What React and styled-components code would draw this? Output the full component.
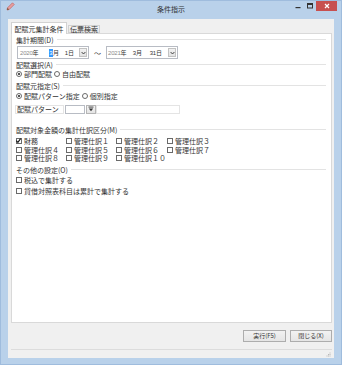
import React from 'react';
import styled, { createGlobalStyle } from 'styled-components';

const FONT = `"Noto Sans CJK JP", "Noto Sans", sans-serif`;

const Global = createGlobalStyle`
  html, body { margin: 0; padding: 0; background: #ffffff; }
  body { font-family: ${FONT}; }
  * { box-sizing: border-box; }
`;

const Window = styled.div`
  width: 342px;
  height: 365px;
  border: 1px solid #9fbcdd;
  background: #b9d1ea;
  display: flex;
  flex-direction: column;
  font-family: ${FONT};
  font-size: 7px;
  line-height: 8px;
  color: #333;
`;

const TitleBar = styled.div`
  height: 18px;
  display: grid;
  grid-template-columns: 1fr auto 1fr;
  align-items: start;
`;

const AppIcon = styled.svg`
  margin: 1px 0 0 5px;
  width: 9px;
  height: 9px;
`;

const Title = styled.div`
  padding-top: 4px;
  font-size: 7px;
  line-height: 8px;
  color: #333;
`;

const Controls = styled.div`
  display: flex;
  justify-content: flex-end;
  align-items: flex-start;
  padding-right: 4px;
`;

const CtrlBtn = styled.div`
  width: ${p => p.$w}px;
  height: 10px;
  display: flex;
  align-items: center;
  justify-content: center;
  background: ${p => (p.$close ? '#c75050' : 'transparent')};
`;

const Client = styled.div`
  flex: 1;
  margin: 0 7px 6px 7px;
  background: #f0f0f0;
  display: flex;
  flex-direction: column;
  padding: 3px 2px 0 3px;
`;

const TabStrip = styled.div`
  height: 11px;
  display: flex;
  align-items: flex-end;
`;

const Tab = styled.div`
  position: relative;
  z-index: ${p => (p.$active ? 1 : 0)};
  width: ${p => p.$w}px;
  height: ${p => (p.$active ? 12 : 8)}px;
  margin-bottom: ${p => (p.$active ? -1 : 0)}px;
  margin-left: ${p => (p.$active ? 0 : 1)}px;
  background: ${p => (p.$active ? '#ffffff' : 'linear-gradient(#f3f3f3, #e8e8e8)')};
  border: 1px solid #d2d2d2;
  border-bottom: ${p => (p.$active ? 'none' : '1px solid #d2d2d2')};
  display: flex;
  align-items: center;
  justify-content: center;
  padding-top: ${p => (p.$active ? 1 : 0)}px;
  white-space: nowrap;
`;

const Panel = styled.div`
  height: 290px;
  background: #ffffff;
  border: 1px solid #d9d9d9;
  padding: 2px 5px 0 4px;
  display: flex;
  flex-direction: column;
`;

const GroupHeader = styled.div`
  display: flex;
  align-items: center;
  gap: 3px;
  height: 8px;
  margin-top: ${p => p.$mt || 0}px;
  white-space: nowrap;
  &::after {
    content: '';
    flex: 1;
    border-top: 1px solid #e3e3e3;
    border-bottom: 1px solid #ffffff;
  }
`;

const DateRow = styled.div`
  display: flex;
  align-items: center;
  height: 13px;
  margin-top: 2px;
  padding-left: 1px;
`;

const DateBox = styled.div`
  width: ${p => p.$w}px;
  height: 13px;
  border: 1px solid #b8bcc4;
  background: #fff;
  display: flex;
  align-items: center;
  padding-left: ${p => p.$pl}px;
  padding-right: 1px;
`;

const Seg = styled.div`
  width: ${p => p.$w}px;
  display: flex;
  justify-content: ${p => (p.$right ? 'flex-end' : 'flex-start')};
  align-items: center;
  white-space: nowrap;
  font-size: 6px;
  line-height: 8px;
`;

const Digits = styled.span`
  font-family: "Liberation Sans", sans-serif;
  font-size: 6px;
  color: ${p => (p.$sel ? '#fff' : p.$muted ? '#8a8a8a' : '#333')};
  background: ${p => (p.$sel ? '#3399ff' : 'transparent')};
  padding: ${p => (p.$sel ? '0 0.5px' : '0')};
  letter-spacing: -0.2px;
`;

const DropBtn = styled.div`
  margin-left: auto;
  width: 8px;
  height: 9px;
  border: 1px solid #c2c2c2;
  background: linear-gradient(#f2f2f2, #e2e2e2);
  display: flex;
  align-items: center;
  justify-content: center;
`;

const Tilde = styled.div`
  width: 17px;
  text-align: center;
`;

const OptRow = styled.div`
  display: flex;
  align-items: center;
  height: 8px;
  margin-top: ${p => p.$mt || 0}px;
  gap: 2px;
`;

const RadioItem = styled.label`
  display: flex;
  align-items: center;
  gap: 2px;
  white-space: nowrap;
`;

const RadioCircle = styled.span`
  width: 6px;
  height: 6px;
  border-radius: 50%;
  border: 1px solid #6a6a6a;
  background: #fff;
  display: flex;
  align-items: center;
  justify-content: center;
  &::after {
    content: '';
    width: 2.5px;
    height: 2.5px;
    border-radius: 50%;
    background: ${p => (p.$on ? '#1a1a1a' : 'transparent')};
  }
`;

const PatternRow = styled.div`
  display: flex;
  align-items: center;
  height: 12px;
  margin-top: 3px;
`;

const PatternLabel = styled.div`
  width: 49px;
  height: 9px;
  margin-left: -1px;
  border: 1px solid #e4e4e4;
  display: flex;
  align-items: center;
  padding-left: 1px;
  white-space: nowrap;
`;

const Field = styled.div`
  width: ${p => p.$w}px;
  height: 9px;
  margin-left: ${p => p.$ml || 0}px;
  border: 1px solid ${p => p.$border || '#b8bcc4'};
  background: #fff;
`;

const SmallBtn = styled.div`
  width: 10px;
  height: 9px;
  margin-left: 1px;
  border: 1px solid #b5b5b5;
  background: linear-gradient(#f4f4f4, #e4e4e4);
  display: flex;
  align-items: center;
  justify-content: center;
`;

const CheckGrid = styled.div`
  display: grid;
  grid-template-columns: 50px 50px 51px auto;
  grid-auto-rows: 8.5px;
  margin-top: 3px;
`;

const CheckItem = styled.label`
  display: flex;
  align-items: center;
  gap: 2px;
  white-space: nowrap;
`;

const Box = styled.span`
  width: 6px;
  height: 6px;
  border: 1px solid #6a6a6a;
  background: #fff;
  display: flex;
  align-items: center;
  justify-content: center;
  flex: none;
`;

const ButtonRow = styled.div`
  display: flex;
  justify-content: flex-end;
  gap: 4px;
  padding-top: 7px;
  height: 26px;
`;

const Button = styled.div`
  width: ${p => p.$w}px;
  height: 12px;
  border: 1px solid #adadad;
  background: linear-gradient(#f2f2f2, #e5e5e5);
  display: flex;
  align-items: center;
  justify-content: center;
  white-space: nowrap;
  font-size: 6px;
`;

const StatusBar = styled.div`
  flex: 1;
  border-top: 1px solid #dcdcdc;
  display: flex;
  justify-content: flex-end;
  align-items: flex-end;
  padding: 0 1px 1px 0;
`;

const Check = () => (
  <svg width="6" height="6" viewBox="0 0 6 6" style={{ overflow: 'visible' }}>
    <path d="M0.3 2.6 L1.9 4.3 L4.6 0.6" fill="none" stroke="#111" strokeWidth="1.1" />
  </svg>
);

const CheckBox = ({ on, children }) => (
  <CheckItem>
    <Box>{on && <Check />}</Box>
    {children}
  </CheckItem>
);

const Radio = ({ on, children }) => (
  <RadioItem>
    <RadioCircle $on={on} />
    {children}
  </RadioItem>
);

const Chevron = () => (
  <svg width="5" height="4" viewBox="0 0 5 4">
    <path d="M0.6 1 L2.5 3 L4.4 1" fill="none" stroke="#333" strokeWidth="0.9" />
  </svg>
);

const DateField = ({ w, pl, year, month, day, sel, widths }) => (
  <DateBox $w={w} $pl={pl}>
    <Seg $w={widths[0]}>
      <Digits $muted>{year}</Digits>年
    </Seg>
    <Seg $w={widths[1]} $right>
      <Digits $sel={sel}>{month}</Digits>月
    </Seg>
    <Seg $w={widths[2]} $right>
      <Digits>{day}</Digits>日
    </Seg>
    <DropBtn>
      <Chevron />
    </DropBtn>
  </DateBox>
);

export default function App() {
  return (
    <>
      <Global />
      <Window>
        <TitleBar>
          <AppIcon viewBox="0 0 9 9">
            <path d="M6.5 0.8 L8.2 2.5 L3.2 7.5 L1 8 L1.5 5.8 Z" fill="#e8a0a0" stroke="#c05050" strokeWidth="0.6" />
            <path d="M1 8 L1.5 5.8 L3.2 7.5 Z" fill="#7a5a3a" />
          </AppIcon>
          <Title>条件指示</Title>
          <Controls>
            <CtrlBtn $w={12}>
              <svg width="6" height="6" viewBox="0 0 6 6">
                <rect x="0.5" y="4" width="5" height="1.2" fill="#333" />
              </svg>
            </CtrlBtn>
            <CtrlBtn $w={12}>
              <svg width="6" height="6" viewBox="0 0 6 6">
                <rect x="0.5" y="0.5" width="5" height="4.5" fill="none" stroke="#333" strokeWidth="1" />
                <rect x="0.5" y="0.5" width="5" height="1.5" fill="#333" />
              </svg>
            </CtrlBtn>
            <CtrlBtn $w={21} $close>
              <svg width="6" height="6" viewBox="0 0 6 6">
                <path d="M1 1 L5 5 M5 1 L1 5" stroke="#fff" strokeWidth="1.2" />
              </svg>
            </CtrlBtn>
          </Controls>
        </TitleBar>
        <Client>
          <TabStrip>
            <Tab $active $w={56}>配賦元集計条件</Tab>
            <Tab $w={32}>伝票検索</Tab>
          </TabStrip>
          <Panel>
            <GroupHeader>集計期間(D)</GroupHeader>
            <DateRow>
              <DateField w={72} pl={2} year="2020" month="3" day="1" sel widths={[17, 22, 15]} />
              <Tilde>～</Tilde>
              <DateField w={72} pl={1} year="2021" month="3" day="31" widths={[17, 17, 20]} />
            </DateRow>
            <GroupHeader $mt={2}>配賦選択(A)</GroupHeader>
            <OptRow $mt={1}>
              <Radio on>部門配賦</Radio>
              <Radio>自由配賦</Radio>
            </OptRow>
            <GroupHeader $mt={4}>配賦元指定(S)</GroupHeader>
            <OptRow $mt={2}>
              <Radio on>配賦パターン指定</Radio>
              <Radio>個別指定</Radio>
            </OptRow>
            <PatternRow>
              <PatternLabel>配賦パターン</PatternLabel>
              <Field $w={20} $ml={1} />
              <SmallBtn>
                <svg width="6" height="6" viewBox="0 0 6 6">
                  <rect x="0.5" y="0.6" width="5" height="0.9" fill="#333" />
                  <path d="M0.8 2.5 L5.2 2.5 L3 5.2 Z" fill="#333" />
                </svg>
              </SmallBtn>
              <Field $w={84} $border="#e4e4e4" />
            </PatternRow>
            <GroupHeader $mt={11}>配賦対象金額の集計仕訳区分(M)</GroupHeader>
            <CheckGrid>
              <CheckBox on>財務</CheckBox>
              <CheckBox>管理仕訳１</CheckBox>
              <CheckBox>管理仕訳２</CheckBox>
              <CheckBox>管理仕訳３</CheckBox>
              <CheckBox>管理仕訳４</CheckBox>
              <CheckBox>管理仕訳５</CheckBox>
              <CheckBox>管理仕訳６</CheckBox>
              <CheckBox>管理仕訳７</CheckBox>
              <CheckBox>管理仕訳８</CheckBox>
              <CheckBox>管理仕訳９</CheckBox>
              <CheckBox>管理仕訳１０</CheckBox>
            </CheckGrid>
            <GroupHeader $mt={3.5}>その他の設定(O)</GroupHeader>
            <OptRow $mt={2}>
              <CheckBox>税込で集計する</CheckBox>
            </OptRow>
            <OptRow $mt={3}>
              <CheckBox>貸借対照表科目は累計で集計する</CheckBox>
            </OptRow>
          </Panel>
          <ButtonRow>
            <Button $w={43}>実行(F5)</Button>
            <Button $w={42}>閉じる(X)</Button>
          </ButtonRow>
          <StatusBar>
            <svg width="5" height="5" viewBox="0 0 5 5">
              <rect x="3.5" y="0.5" width="1" height="1" fill="#b8b8b8" />
              <rect x="2" y="2" width="1" height="1" fill="#b8b8b8" />
              <rect x="3.5" y="2" width="1" height="1" fill="#b8b8b8" />
              <rect x="0.5" y="3.5" width="1" height="1" fill="#b8b8b8" />
              <rect x="2" y="3.5" width="1" height="1" fill="#b8b8b8" />
              <rect x="3.5" y="3.5" width="1" height="1" fill="#b8b8b8" />
            </svg>
          </StatusBar>
        </Client>
      </Window>
    </>
  );
}
